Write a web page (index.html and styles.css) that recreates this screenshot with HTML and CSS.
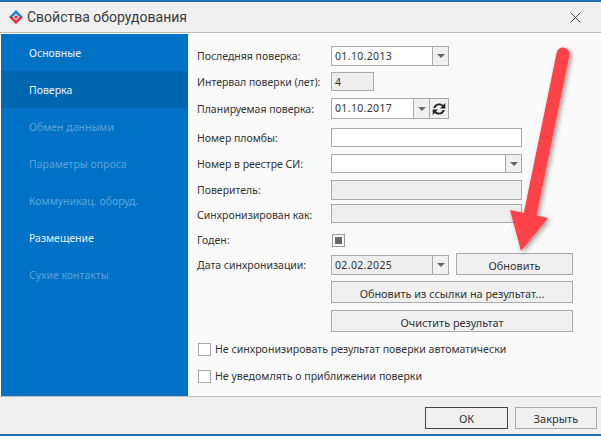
FILE: index.html
```html
<!DOCTYPE html>
<html lang="ru">
<head>
<meta charset="utf-8">
<title>Свойства оборудования</title>
<link rel="stylesheet" href="styles.css">
</head>
<body>
<div class="window">
  <header class="titlebar">
    <svg class="logo" width="14" height="14" viewBox="0 0 14 14">
      <path d="M7 0L14 7H10.5L7 3.5L3.5 7H0Z" fill="#1a7fd4"/>
      <path d="M0 7H3.500L7 10.500L10.500 7H14L7 14Z" fill="#e8273a"/>
      <path d="M7 5L9 7L7 9L5 7Z" fill="#e8273a"/>
    </svg>
    <span class="title">Свойства оборудования</span>
    <svg class="close" width="11" height="11" viewBox="0 0 11 11"><path d="M.5.5L10.5 10.5M10.5.5L.5 10.500" stroke="#444" stroke-width="1" fill="none"/></svg>
  </header>
  <main class="body">
    <nav class="side">
      <div class="nav">Основные</div>
      <div class="nav active">Поверка</div>
      <div class="nav off">Обмен данными</div>
      <div class="nav off">Параметры опроса</div>
      <div class="nav off">Коммуникац. оборуд.</div>
      <div class="nav">Размещение</div>
      <div class="nav off">Сухие контакты</div>
    </nav>
    <section class="content">
      <div class="form">
        <label class="lab">Последняя поверка:</label>
        <div class="field w118 h20"><span class="val">01.10.2013</span><span class="drop"><i class="tri"></i></span></div>
        <label class="lab">Интервал поверки (лет):</label>
        <div class="field w43 h19 dis"><span class="val">4</span></div>
        <label class="lab low">Планируемая поверка:</label>
        <div class="field w118 h21"><span class="val">01.10.2017</span><span class="drop"><i class="tri"></i></span>
          <span class="refresh"><svg width="16" height="14" viewBox="0 0 16 14"><path d="M2.200 6C3 3 5.300 1.400 8 1.400c1.700 0 3.100.6 4.200 1.700L14.300 1v5.400H9L11 4.400C10.200 3.600 9.200 3.300 8 3.300 6.300 3.300 5 4.300 4.400 6Z M13.800 8C13 11 10.700 12.600 8 12.600c-1.700 0-3.100-.6-4.200-1.700L1.700 13V7.600H7L5 9.600C5.800 10.400 6.800 10.700 8 10.700 9.700 10.700 11 9.700 11.600 8Z" fill="#222"/></svg></span>
        </div>
        <label class="lab">Номер пломбы:</label>
        <div class="field w191 h19"></div>
        <label class="lab">Номер в реестре СИ:</label>
        <div class="field w191 h19"><span class="val"></span><span class="drop"><i class="tri"></i></span></div>
        <label class="lab">Поверитель:</label>
        <div class="field w191 h20 dis"></div>
        <label class="lab low">Синхронизирован как:</label>
        <div class="field w191 h19 dis"></div>
        <label class="lab">Годен:</label>
        <span class="check"><i class="mark"></i></span>
        <label class="lab">Дата синхронизации:</label>
        <div class="syncrow">
          <div class="field w118 h20 dis"><span class="val">02.02.2025</span><span class="drop"><i class="tri"></i></span></div>
          <button class="btn update">Обновить</button>
        </div>
        <span></span>
        <button class="btn wide">Обновить из ссылки на результат...</button>
        <span></span>
        <button class="btn wide">Очистить результат</button>
      </div>
      <div class="opts">
        <div class="opt"><span class="box"></span>Не синхронизировать результат поверки автоматически</div>
        <div class="opt"><span class="box"></span>Не уведомлять о приближении поверки</div>
      </div>
    </section>
  </main>
  <footer class="foot">
    <button class="fbtn primary">ОК</button>
    <button class="fbtn close-btn">Закрыть</button>
  </footer>
</div>
<svg class="arrow" width="601" height="436" viewBox="0 0 601 436">
  <defs><filter id="sh" x="-30%" y="-10%" width="160%" height="120%"><feDropShadow dx="2" dy="2" stdDeviation="2.5" flood-color="#000" flood-opacity=".4"/></filter></defs>
  <g filter="url(#sh)">
    <path d="M563 54L529 220" stroke="#ff4246" stroke-width="13" stroke-linecap="round" fill="none"/>
    <path d="M510 210L548 218L521 251Z" fill="#ff4246"/>
  </g>
</svg>
</body>
</html>
```
FILE: styles.css
```css
* { box-sizing: border-box; }
html, body { margin: 0; padding: 0; }
body { width: 601px; height: 436px; overflow: hidden; font-family: "Noto Sans", sans-serif; font-size: 10.5px; color: #333; position: relative; }
.window { width: 601px; height: 436px; display: flex; flex-direction: column; background: #f0f0f0; border-top: 2px solid #1f6fb5; border-bottom: 2px solid #1f6fb5; }
.titlebar { height: 30px; flex: none; display: flex; align-items: center; padding: 0 20px 0 9px; border-bottom: 1px solid #b9b9b9; box-sizing: content-box; }
.logo { flex: none; }
.title { font-family: Roboto, sans-serif; font-size: 14px; margin-left: 4px; color: #3a3a3a; flex: 1; }
.close { flex: none; }
.body { flex: 1; display: flex; background: #fafafa; padding: 1px 0 0 1px; min-height: 0; }
.side { width: 187px; flex: none; background: #0072c6; padding-top: 0; }
.nav { height: 37px; display: flex; align-items: center; padding-left: 28px; color: #e8f3fb; }
.nav.active { background: #0066b0; }
.nav.off { color: #5ba3dc; }
.content { flex: 1; padding: 12px 0 0 9px; }
.form { display: grid; grid-template-columns: 134px 1fr; grid-template-rows: 26px 26px 30px 26px 26px 24px 26px 25px 26px 29px 22px; align-items: start; }
.lab { line-height: 20px; white-space: nowrap; }
.low { margin-top: 1px; }
.field { display: flex; align-items: stretch; background: #fff; border: 1px solid #a9a9a9; }
.w118 { width: 118px; }
.w43 { width: 43px; }
.w191 { width: 191px; }
.h19 { height: 19px; }
.h20 { height: 20px; }
.h21 { height: 21px; }
.dis { background: #eeeeee; }
.val { flex: 1; padding-left: 3px; line-height: 18px; letter-spacing: .35px; }
.drop { width: 16px; flex: none; background: #f0f0f0; border-left: 1px solid #a9a9a9; display: flex; align-items: center; justify-content: center; }
.tri { width: 0; height: 0; border-left: 4px solid transparent; border-right: 4px solid transparent; border-top: 4px solid #666; }
.refresh { width: 19px; flex: none; background: #f0f0f0; border-left: 1px solid #a9a9a9; display: flex; align-items: center; justify-content: center; }
.check { width: 13px; height: 13px; margin: 4px 0 0 1px; background: #fff; border: 1px solid #999; display: flex; align-items: center; justify-content: center; }
.mark { width: 7px; height: 7px; background: #666; }
.syncrow { display: flex; gap: 7px; align-items: flex-start; margin-top: 0; }
.btn { font: inherit; font-size: 10.9px; color: #333; background: #f0f0f0; border: 1px solid #a9a9a9; padding: 2px 0 0; }
.update { width: 117px; height: 22px; margin-top: -2px; }
.wide { width: 242px; height: 22px; }
.opts { margin: 8px 0 0 1px; display: flex; flex-direction: column; gap: 9px; font-size: 10.6px; }
.opt { display: flex; align-items: center; height: 18px; gap: 4px; }
.box { width: 13px; height: 13px; background: #fff; border: 1px solid #a9a9a9; flex: none; }
.foot { height: 27px; flex: none; border-top: 1px solid #bdbdbd; display: flex; justify-content: flex-end; gap: 7px; padding: 10px 4px 0 0; box-sizing: content-box; }
.fbtn { font: inherit; font-size: 11px; color: #333; width: 83px; height: 22px; background: #f0f0f0; border: 1px solid #a9a9a9; padding: 0; }
.close-btn { width: 82px; }
.primary { border-color: #444; }
.arrow { position: absolute; left: 0; top: 0; pointer-events: none; }
```
